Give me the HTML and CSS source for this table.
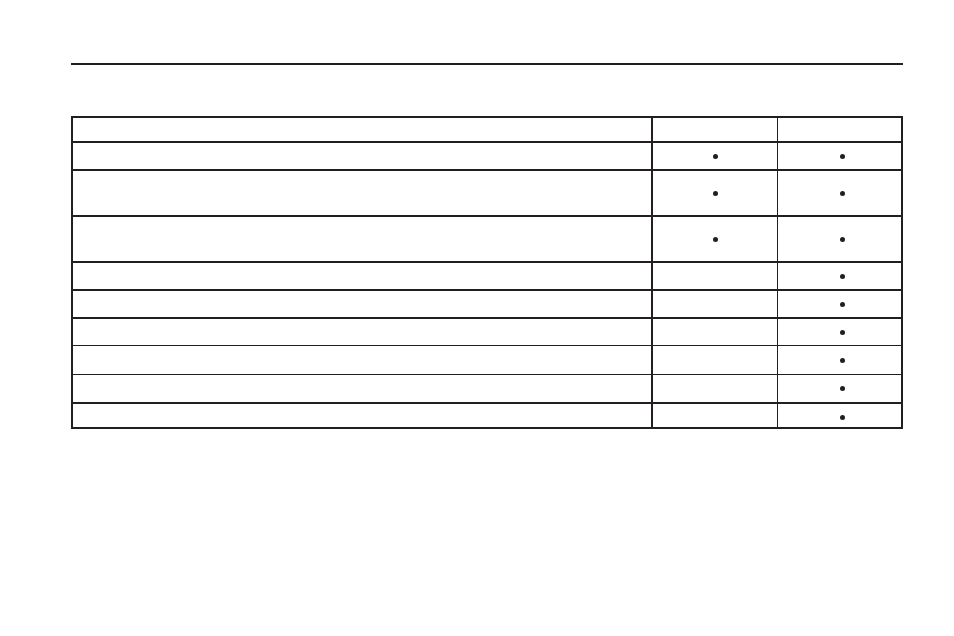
FILE: index.html
```html
<!DOCTYPE html>
<html>
<head>
<meta charset="utf-8">
<link rel="stylesheet" href="styles.css">
</head>
<body>
<div class="page">
  <div class="rule"></div>
  <div class="grid">
    <div class="c c1 r-thick"></div><div class="c c2 r-thick"></div><div class="c c3 r-thick"></div>
    <div class="c c1 r-thick"></div><div class="c c2 r-thick"><span class="dot"></span></div><div class="c c3 r-thick"><span class="dot"></span></div>
    <div class="c c1 r-thick"></div><div class="c c2 r-thick"><span class="dot"></span></div><div class="c c3 r-thick"><span class="dot"></span></div>
    <div class="c c1 r-thick"></div><div class="c c2 r-thick"><span class="dot"></span></div><div class="c c3 r-thick"><span class="dot"></span></div>
    <div class="c c1 r-thick"></div><div class="c c2 r-thick"></div><div class="c c3 r-thick"><span class="dot"></span></div>
    <div class="c c1 r-thick"></div><div class="c c2 r-thick"></div><div class="c c3 r-thick"><span class="dot"></span></div>
    <div class="c c1 r-thin"></div><div class="c c2 r-thin"></div><div class="c c3 r-thin"><span class="dot"></span></div>
    <div class="c c1 r-thin"></div><div class="c c2 r-thin"></div><div class="c c3 r-thin"><span class="dot"></span></div>
    <div class="c c1 r-thick"></div><div class="c c2 r-thick"></div><div class="c c3 r-thick"><span class="dot"></span></div>
    <div class="c c1 r-thick"></div><div class="c c2 r-thick"></div><div class="c c3 r-thick last"><span class="dot"></span></div>
  </div>
</div>
</body>
</html>
```

FILE: styles.css
```css
html, body {
  margin: 0;
  padding: 0;
  background: #ffffff;
  font-family: "Liberation Sans", Arial, sans-serif;
}
.page {
  width: 954px;
  height: 636px;
  padding: 63px 0 0 71px;
  box-sizing: border-box;
}
.rule {
  width: 832px;
  height: 2px;
  background: #231f20;
}
.grid {
  margin-top: 51px;
  width: 832px;
  box-sizing: border-box;
  border-top: 2px solid #231f20;
  border-left: 2px solid #231f20;
  display: grid;
  grid-template-columns: 580px 125px 125px;
  grid-template-rows: 25px 28px 46px 46px 28px 28px 27px 29px 29px 25px;
}
.c {
  box-sizing: border-box;
  display: flex;
  align-items: center;
  justify-content: center;
}
.c1 { border-right: 2px solid #231f20; }
.c2 { border-right: 1px solid #231f20; }
.c3 { border-right: 2px solid #231f20; padding-left: 6px; }
.r-thick { border-bottom: 2px solid #231f20; }
.r-thin { border-bottom: 1px solid #231f20; }
.last { padding-top: 3px; }
.dot {
  width: 5px;
  height: 5px;
  border-radius: 50%;
  background: #231f20;
}
```
